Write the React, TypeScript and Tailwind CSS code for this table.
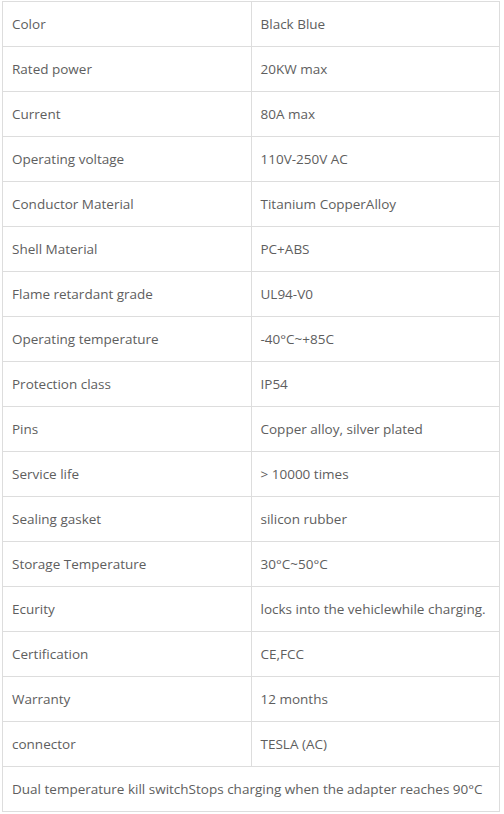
const specs: [string, string][] = [
  ['Color', 'Black Blue'],
  ['Rated power', '20KW max'],
  ['Current', '80A max'],
  ['Operating voltage', '110V-250V AC'],
  ['Conductor Material', 'Titanium CopperAlloy'],
  ['Shell Material', 'PC+ABS'],
  ['Flame retardant grade', 'UL94-V0'],
  ['Operating temperature', '-40°C~+85C'],
  ['Protection class', 'IP54'],
  ['Pins', 'Copper alloy, silver plated'],
  ['Service life', '> 10000 times'],
  ['Sealing gasket', 'silicon rubber'],
  ['Storage Temperature', '30°C~50°C'],
  ['Ecurity', 'locks into the vehiclewhile charging.'],
  ['Certification', 'CE,FCC'],
  ['Warranty', '12 months'],
  ['connector', 'TESLA (AC)'],
];

export default function App() {
  return (
    <div className="bg-white pt-px pl-[2px] font-['Open_Sans',sans-serif] text-[13.5px] text-[#5e5e5e]">
      <table className="w-[498px] table-fixed border-collapse">
        <tbody>
          {specs.map(([label, value]) => (
            <tr key={label}>
              <td className="h-[45px] w-1/2 whitespace-nowrap border border-[#ddd] px-[9px] py-0 align-middle">{label}</td>
              <td className="h-[45px] w-1/2 whitespace-nowrap border border-[#ddd] px-[9px] py-0 align-middle">{value}</td>
            </tr>
          ))}
          <tr>
            <td colSpan={2} className="h-[45px] whitespace-nowrap border border-[#ddd] px-[9px] py-0 align-middle">
              Dual temperature kill switchStops charging when the adapter reaches 90°C
            </td>
          </tr>
        </tbody>
      </table>
    </div>
  );
}
